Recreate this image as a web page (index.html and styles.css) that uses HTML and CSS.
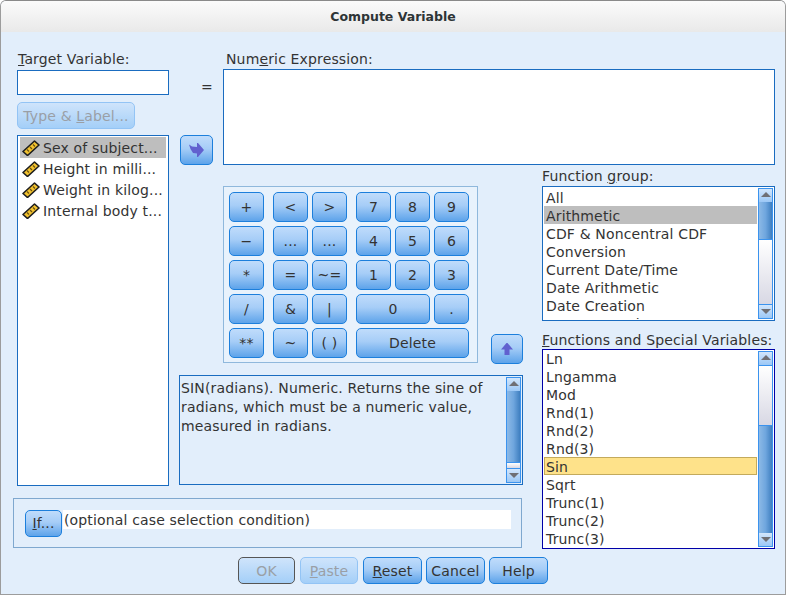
FILE: index.html
```html
<!DOCTYPE html>
<html lang="en">
<head>
  <meta charset="UTF-8">
  <title>Compute Variable</title>
  <link rel="stylesheet" href="styles.css">
</head>
<body>

<div class="dialog">
  <div class="titlebar">Compute Variable</div>

  <div class="dialog-body">
    <div class="target">
      <label class="field-label target-label"><u>T</u>arget Variable:</label>
      <input type="text" class="target-input">
      <button class="btn btn-disabled btn-type">Type &amp; <u>L</u>abel...</button>
    </div>

    <div class="equals">=</div>

    <div class="expr">
      <label class="field-label expr-label">Num<u>e</u>ric Expression:</label>
      <textarea class="expr-input"></textarea>
    </div>

    <ul class="list vars">
      <li class="selected"><svg class="ruler" viewBox="0 0 18 16"><use href="#ruler"/></svg>Sex of subject...</li>
      <li><svg class="ruler" viewBox="0 0 18 16"><use href="#ruler"/></svg>Height in milli...</li>
      <li><svg class="ruler" viewBox="0 0 18 16"><use href="#ruler"/></svg>Weight in kilog...</li>
      <li><svg class="ruler" viewBox="0 0 18 16"><use href="#ruler"/></svg>Internal body t...</li>
    </ul>

    <button class="btn btn-icon btn-move">
      <svg viewBox="0 0 15 14" width="15" height="14"><path d="M0 1.5 3 3.5 8 4V0h1l6 7-6 7H8v-3.5L4 10 1.500 6z" fill="#6161cf"/></svg>
    </button>

    <div class="mid">
      <div class="calc-row">
        <div class="keypad">
          <div class="keys keys-ops">
            <button class="btn">+</button>
            <button class="btn">−</button>
            <button class="btn">*</button>
            <button class="btn">/</button>
            <button class="btn">**</button>
          </div>
          <div class="keys keys-cmp">
            <button class="btn">&lt;</button>
            <button class="btn">&gt;</button>
            <button class="btn">...</button>
            <button class="btn">...</button>
            <button class="btn">=</button>
            <button class="btn">~=</button>
            <button class="btn">&amp;</button>
            <button class="btn">|</button>
            <button class="btn">~</button>
            <button class="btn">( )</button>
          </div>
          <div class="keys keys-num">
            <button class="btn">7</button>
            <button class="btn">8</button>
            <button class="btn">9</button>
            <button class="btn">4</button>
            <button class="btn">5</button>
            <button class="btn">6</button>
            <button class="btn">1</button>
            <button class="btn">2</button>
            <button class="btn">3</button>
            <button class="btn span-2">0</button>
            <button class="btn">.</button>
            <button class="btn span-3">Delete</button>
          </div>
        </div>
        <button class="btn btn-icon btn-up">
          <svg viewBox="0 0 12 12" width="12" height="12"><path d="M5.500 0h1L12 6.500H8.500V12h-5V6.500H0z" fill="#6161cf"/></svg>
        </button>
      </div>

      <div class="desc">
        <p>SIN(radians). Numeric. Returns the sine of radians, which must be a numeric value, measured in radians.</p>
        <div class="scrollbar">
          <span class="sb-arrow sb-up"></span>
          <span class="sb-thumb" style="flex-basis: 71px"></span>
          <span class="sb-track"></span>
          <span class="sb-arrow sb-down"></span>
        </div>
      </div>
    </div>

    <div class="side">
      <label class="field-label">Function <u>g</u>roup:</label>
      <div class="list-wrap groups">
        <ul class="list-items">
          <li>All</li>
          <li class="selected">Arithmetic</li>
          <li>CDF &amp; Noncentral CDF</li>
          <li>Conversion</li>
          <li>Current Date/Time</li>
          <li>Date Arithmetic</li>
          <li>Date Creation</li>
          <li>Date Extraction</li>
        </ul>
        <div class="scrollbar">
          <span class="sb-arrow sb-up"></span>
          <span class="sb-thumb" style="flex-basis: 37px"></span>
          <span class="sb-track"></span>
          <span class="sb-arrow sb-down"></span>
        </div>
      </div>

      <label class="field-label funcs-label"><u>F</u>unctions and Special Variables:</label>
      <div class="list-wrap funcs">
        <ul class="list-items">
          <li>Ln</li>
          <li>Lngamma</li>
          <li>Mod</li>
          <li>Rnd(1)</li>
          <li>Rnd(2)</li>
          <li>Rnd(3)</li>
          <li class="current">Sin</li>
          <li>Sqrt</li>
          <li>Trunc(1)</li>
          <li>Trunc(2)</li>
          <li>Trunc(3)</li>
        </ul>
        <div class="scrollbar">
          <span class="sb-arrow sb-up"></span>
          <span class="sb-track"></span>
          <span class="sb-thumb" style="flex-basis: 107px"></span>
          <span class="sb-arrow sb-down"></span>
        </div>
      </div>
    </div>

    <div class="if-panel">
      <button class="btn btn-if"><u>I</u>f...</button>
      <div class="if-text">(optional case selection condition)</div>
    </div>
  </div>

  <div class="actions">
    <button class="btn btn-disabled btn-ok">OK</button>
    <button class="btn btn-disabled btn-paste"><u>P</u>aste</button>
    <button class="btn btn-reset"><u>R</u>eset</button>
    <button class="btn btn-cancel">Cancel</button>
    <button class="btn btn-help">Help</button>
  </div>
</div>

<svg class="defs" width="0" height="0">
  <symbol id="ruler" viewBox="0 0 18 16">
    <path d="M1 11.5 12.5 1l4.5 4L5.500 15.500z" fill="#f2c230" stroke="#1e1e1e" stroke-width="1.6" stroke-linejoin="round"/>
    <path d="M5 9.500l2 2M8 7l2 2M11 4.500l2 2" stroke="#6b5210" stroke-width="1.2"/>
  </symbol>
</svg>

</body>
</html>
```

FILE: styles.css
```css
* {
  box-sizing: border-box;
}
html, body {
  margin: 0;
  height: 100%;
  background: #fff;
}
body {
  font-family: 'DejaVu Sans', sans-serif;
  font-size: 14px;
  letter-spacing: 0.15px;
  color: #333;
  overflow: hidden;
}
.defs {
  position: absolute;
}
.dialog {
  height: 595px;
  background: #e2eefb;
  border: 1px solid #9c9c9c;
  border-top-color: #8a8a8a;
  border-radius: 6px 6px 0 0;
  overflow: hidden;
}
.titlebar {
  height: 31px;
  line-height: 32px;
  text-align: center;
  font-size: 12.5px;
  font-weight: bold;
  letter-spacing: 0;
  color: #2e3436;
  background: linear-gradient(#fbfbfb, #e9e9e9);
}
.dialog-body {
  display: grid;
  grid-template-columns: 152px 54px 319px 233px;
  grid-template-rows: 85px 30px 333px 51px;
  grid-template-areas:
    "target equals expr expr"
    "vars   move   expr expr"
    "vars   mid    mid  side"
    "ifp    ifp    ifp  side";
  padding: 18px 0 0 16px;
}
.field-label {
  display: block;
  height: 19px;
  line-height: 19px;
  white-space: nowrap;
}

/* buttons */
.btn {
  height: 30px;
  padding: 0;
  border: 1px solid #1c7fdc;
  border-radius: 5px;
  background: linear-gradient(#c0dcfb, #a6cdf7 45%, #5da3ea);
  font-family: inherit;
  font-size: 14px;
  letter-spacing: inherit;
  color: #333;
}
.btn svg {
  display: block;
  margin: auto;
}
.btn-disabled {
  border-color: #93c4f5;
  background: linear-gradient(#cfe4fb, #a4cff8);
  color: #9a9fa6;
}
.btn-icon {
  width: 33px;
  height: 30px;
}

/* target variable */
.target {
  grid-area: target;
}
.target-label {
  padding-left: 1px;
}
.target-input {
  display: block;
  width: 152px;
  height: 25px;
  margin: 1px 0 0;
  padding: 0;
  border: 1px solid #1a6cc0;
  background: #fff;
}
.btn-type {
  display: block;
  width: 118px;
  height: 27px;
  margin-top: 7px;
  white-space: nowrap;
}
.equals {
  grid-area: equals;
  padding-top: 28px;
  margin-left: 32px;
  line-height: 18px;
}

/* numeric expression */
.expr {
  grid-area: expr;
  width: 552px;
}
.expr-label {
  padding-left: 3px;
}
.expr-input {
  display: block;
  width: 552px;
  height: 96px;
  margin: 0;
  border: 1px solid #1a6cc0;
  background: #fff;
  resize: none;
}

/* lists */
.list, .list-items {
  margin: 0;
  padding: 0;
  list-style: none;
}
.vars {
  grid-area: vars;
  height: 351px;
  padding: 1px 2px;
  border: 1px solid #1a6cc0;
  background: #fff;
}
.vars li {
  display: flex;
  align-items: center;
  height: 21px;
  white-space: nowrap;
  overflow: hidden;
}
.vars .selected {
  background: #bebebe;
}
.ruler {
  flex: none;
  width: 18px;
  height: 16px;
  margin: 0 3px 0 2px;
}
.btn-move {
  grid-area: move;
  margin-left: 11px;
}

/* keypad and description */
.mid {
  grid-area: mid;
  padding: 21px 0 0 10px;
}
.calc-row {
  display: flex;
  align-items: flex-end;
  gap: 13px;
  margin-left: 44px;
}
.keypad {
  display: flex;
  gap: 9px;
  width: 255px;
  height: 177px;
  padding: 5px 0 0 5px;
  border: 1px solid #8fb8dc;
  background: #e8f2fc;
}
.keys {
  display: grid;
  grid-auto-rows: 30px;
  gap: 4px;
}
.keys-ops {
  grid-template-columns: 35px;
}
.keys-cmp {
  grid-template-columns: 35px 35px;
}
.keys-num {
  grid-template-columns: 35px 35px 35px;
}
.span-2 {
  grid-column: span 2;
}
.span-3 {
  grid-column: span 3;
}
.btn-up {
  width: 32px;
  height: 30px;
  margin-bottom: -1px;
}
.desc {
  display: flex;
  width: 344px;
  height: 110px;
  margin-top: 12px;
  padding: 1px;
  border: 1px solid #1a6cc0;
}
.desc p {
  flex: 1;
  margin: 0;
  padding: 2px 0 0;
  line-height: 19px;
}

/* scrollbars */
.scrollbar {
  flex: none;
  display: flex;
  flex-direction: column;
  width: 15px;
  border: 1px solid #3b93ee;
  background: #fff;
}
.sb-arrow {
  position: relative;
  flex: 0 0 13px;
  background: linear-gradient(#d2e6fc, #9cc8f6);
}
.sb-arrow::after {
  content: "";
  position: absolute;
  left: 2px;
  border-left: 5px solid transparent;
  border-right: 5px solid transparent;
}
.sb-up::after {
  top: 3px;
  border-bottom: 5px solid #6f6f74;
}
.sb-down::after {
  top: 4px;
  border-top: 5px solid #6f6f74;
}
.sb-thumb {
  flex: none;
  background: linear-gradient(90deg, #8cb9e6, #6fa6de 50%, #3f7fc0);
}
.sb-track {
  flex: 1;
  background: linear-gradient(#fff, #d8d8e4);
  border-top: 1px solid #3b93ee;
  border-bottom: 1px solid #3b93ee;
}

/* function lists */
.side {
  grid-area: side;
  padding-top: 2px;
}
.list-wrap {
  display: flex;
  width: 233px;
  padding: 1px;
  border: 1px solid #1a6cc0;
  background: #fff;
}
.list-items {
  flex: 1;
  overflow: hidden;
  padding-right: 1px;
}
.list-items li {
  height: 18px;
  line-height: 20px;
  padding-left: 2px;
  white-space: nowrap;
}
.list-items .selected {
  background: #bebebe;
}
.list-items .current {
  background: #fee28a;
  border: 1px solid #c3aa5c;
  padding-left: 1px;
  line-height: 18px;
}
.groups {
  height: 135px;
}
.funcs-label {
  margin-top: 10px;
  height: 18px;
  line-height: 18px;
}
.funcs {
  height: 200px;
  border-color: #0000a8;
}
.funcs .list-items {
  margin-top: -2px;
}

/* if panel */
.if-panel {
  grid-area: ifp;
  display: flex;
  align-items: center;
  gap: 1px;
  width: 509px;
  height: 50px;
  margin-left: -4px;
  padding: 0 10px 0 11px;
  border: 1px solid #7fa8cf;
}
.btn-if {
  flex: none;
  width: 37px;
  height: 27px;
}
.if-text {
  flex: 1;
  height: 19px;
  padding-left: 1px;
  line-height: 20px;
  margin-top: -8px;
  background: #fff;
}

/* bottom row */
.actions {
  display: flex;
  gap: 4px;
  margin: 8px 0 0 237px;
}
.actions .btn {
  height: 27px;
  flex: none;
}
.btn-ok {
  width: 57px;
  border-color: #555;
  color: #9aa0a6;
}
.btn-paste {
  width: 58px;
  margin-left: 1px;
}
.btn-reset,
.btn-cancel,
.btn-help {
  width: 59px;
}
.btn-reset {
  margin-left: 1px;
}
```
